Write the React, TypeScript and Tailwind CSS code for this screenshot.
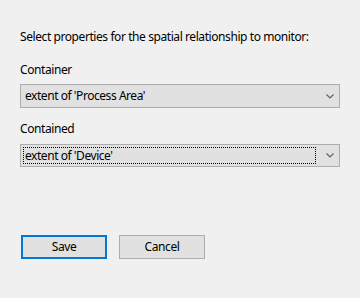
const font = { fontFamily: '"Noto Sans", "Open Sans", sans-serif' }

function Chevron() {
	return (
		<svg width="8" height="5" viewBox="0 0 8 5" className="shrink-0">
			<path d="M0.5 0.5 L4 4 L7.5 0.5" fill="none" stroke="#606060" strokeWidth="1.2" />
		</svg>
	)
}

function Combo({ value, focused, h }: { value: string; focused?: boolean; h: string }) {
	return (
		<div className={`flex ${h} w-[320px] items-center border border-[#adadad] bg-[#e1e1e1] pl-[2px] pr-[4px]`}>
			<div
				className={`flex flex-1 items-center pl-[1px] ${focused ? "border border-dotted border-black" : "border border-transparent"}`}
				style={{ height: "calc(100% - 4px)" }}
			>
				<span className="text-[12px] leading-none tracking-[-0.45px] text-black">{value}</span>
			</div>
			<div className="flex w-[19px] justify-end pr-[1px]">
				<Chevron />
			</div>
		</div>
	)
}

export default function App() {
	return (
		<div className="flex h-[298px] w-[360px] flex-col bg-[#f0f0f0] pl-[20px] text-black tracking-[-0.42px]" style={font}>
			<p className="mt-[29px] text-[12px] leading-[16px]">Select properties for the spatial relationship to monitor:</p>
			<p className="mt-[17px] text-[12px] leading-[16px]">Container</p>
			<div className="mt-[6px]">
				<Combo value="extent of 'Process Area'" h="h-[24px]" />
			</div>
			<p className="mt-[13px] text-[12px] leading-[16px]">Contained</p>
			<div className="mt-[7px]">
				<Combo value="extent of 'Device'" focused h="h-[23px]" />
			</div>
			<div className="ml-[1px] mt-[68px] flex gap-[12px]">
				<button className="h-[24px] w-[86px] border-2 border-[#0078d7] bg-[#e1e1e1] text-[12px]">Save</button>
				<button className="h-[24px] w-[86px] border border-[#adadad] bg-[#e1e1e1] text-[12px]">Cancel</button>
			</div>
		</div>
	)
}
